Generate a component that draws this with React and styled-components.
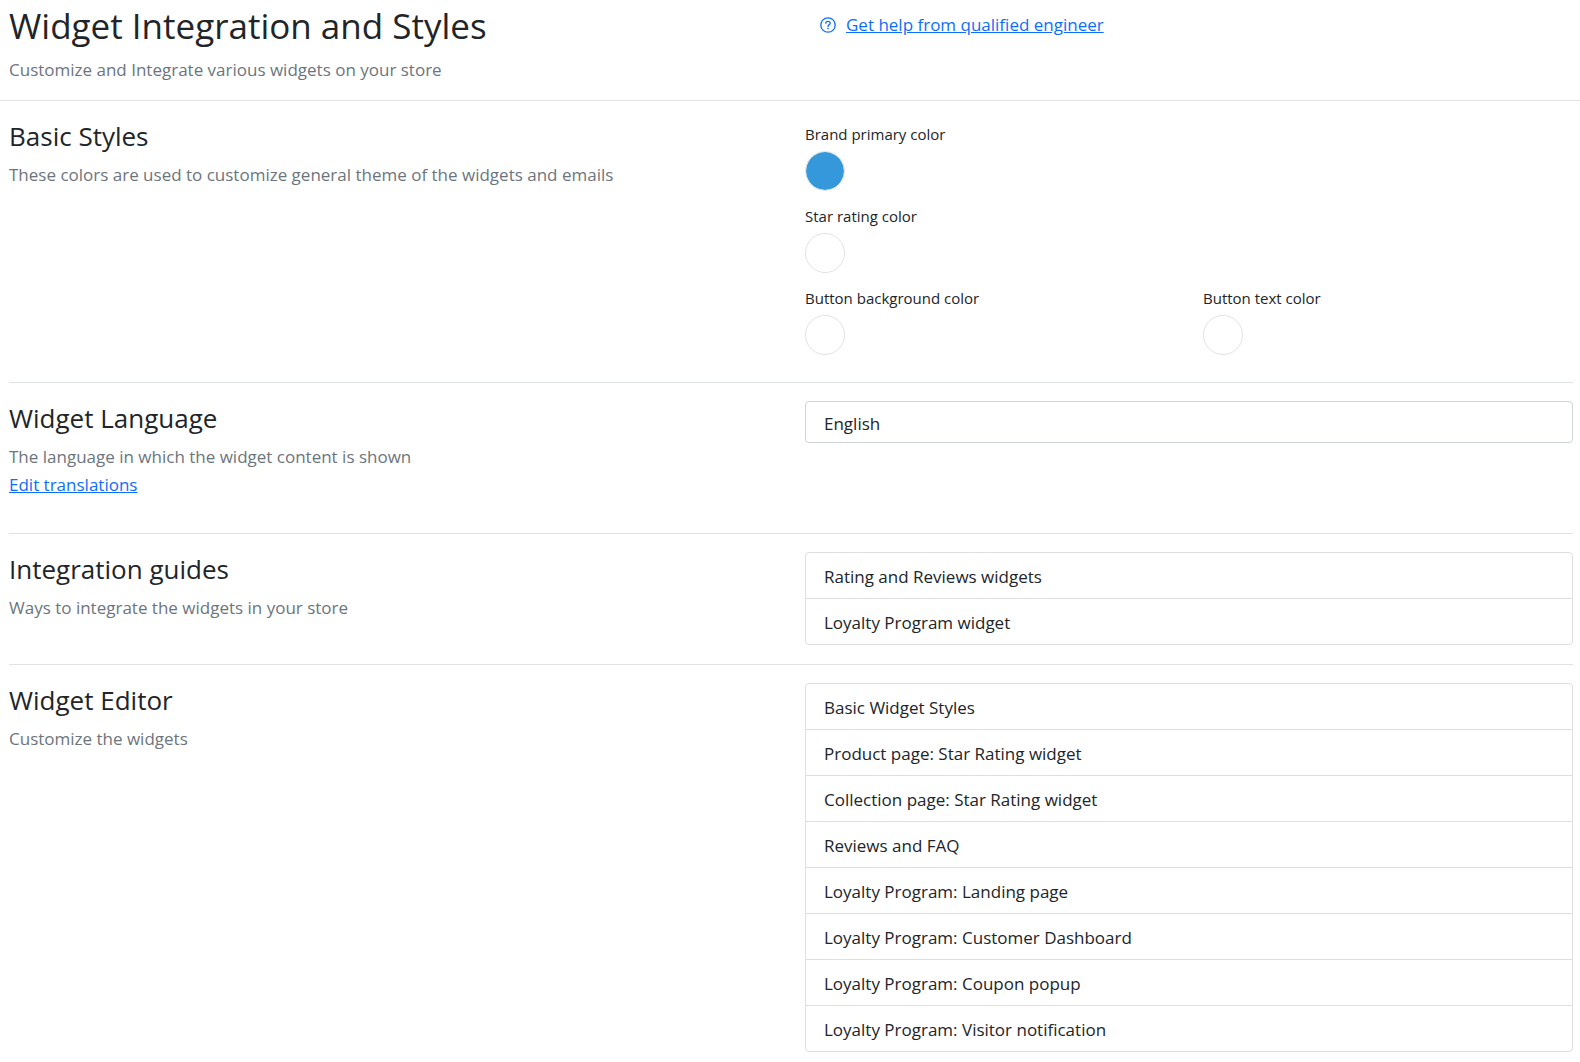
import React from "react";
import styled, { createGlobalStyle } from "styled-components";

const GlobalStyle = createGlobalStyle`
  *, *::before, *::after { box-sizing: border-box; }
  body {
    margin: 0;
    background: #fff;
    color: #212529;
    font-family: "Segoe UI", "Open Sans", "Noto Sans", sans-serif;
    font-size: 17px;
    line-height: 28px;
  }
`;

const Columns = styled.div`
  display: grid;
  grid-template-columns: minmax(0, 1fr) minmax(0, 1fr);
  column-gap: 28px;
`;

const Header = styled.header`
  padding: 4px 7px 16px 9px;
  border-bottom: 1px solid #dee2e6;
`;

const Main = styled.main`
  padding: 0 7px 8px 9px;
`;

const Section = styled.section`
  padding: 18px 0 ${(p) => p.$bottom || 19}px;
  & + & { border-top: 1px solid #dee2e6; }
`;

const PageTitle = styled.h1`
  margin: 0 0 8px;
  font-size: 35px;
  line-height: 44px;
  font-weight: 400;
`;

const SectionTitle = styled.h2`
  margin: 0 0 8px;
  font-size: 26px;
  line-height: 34px;
  font-weight: 400;
`;

const Muted = styled.p`
  margin: 0;
  color: #6c757d;
`;

const Link = styled.a`
  color: #0d6efd;
  text-decoration: underline;
`;

const Help = styled.div`
  display: flex;
  align-items: center;
  gap: 10px;
  height: 42px;
  padding-left: 15px;
  color: #0d6efd;
  svg { display: block; }
`;

const Swatches = styled.div`
  display: grid;
  grid-template-columns: minmax(0, 1fr) minmax(0, 1fr);
  column-gap: 28px;
  row-gap: 13px;
  padding-top: 3px;
`;

const Field = styled.div`
  display: flex;
  flex-direction: column;
  align-items: flex-start;
  gap: 5px;
  grid-column: ${(p) => (p.$wide ? "1 / -1" : "auto")};
`;

const FieldLabel = styled.label`
  font-size: 15px;
  line-height: 24px;
`;

const ColorInput = styled.input`
  appearance: none;
  width: 40px;
  height: 40px;
  padding: 0;
  border: 1px solid #dee2e6;
  border-radius: 50%;
  background: none;
  overflow: hidden;
  cursor: pointer;
  &::-webkit-color-swatch-wrapper { padding: 0; }
  &::-webkit-color-swatch { border: 0; border-radius: 50%; }
`;

const Select = styled.select`
  appearance: none;
  display: block;
  width: 100%;
  height: 42px;
  padding: 3px 18px 0;
  border: 1px solid #ced4da;
  border-radius: 4px;
  background: #fff;
  color: inherit;
  font: inherit;
`;

const List = styled.ul`
  margin: 0;
  padding: 0;
  list-style: none;
  border: 1px solid #dfdfdf;
  border-radius: 4px;
`;

const Item = styled.li`
  & + & { border-top: 1px solid #dfdfdf; }
`;

const ItemLink = styled.a`
  display: block;
  padding: 10px 18px 7px;
  color: inherit;
  text-decoration: none;
`;

const colors = [
  { id: "brand", label: "Brand primary color", value: "#3498db", wide: true },
  { id: "star", label: "Star rating color", value: "#ffffff", wide: true },
  { id: "button-bg", label: "Button background color", value: "#ffffff" },
  { id: "button-text", label: "Button text color", value: "#ffffff" },
];

const guides = ["Rating and Reviews widgets", "Loyalty Program widget"];

const editors = [
  "Basic Widget Styles",
  "Product page: Star Rating widget",
  "Collection page: Star Rating widget",
  "Reviews and FAQ",
  "Loyalty Program: Landing page",
  "Loyalty Program: Customer Dashboard",
  "Loyalty Program: Coupon popup",
  "Loyalty Program: Visitor notification",
];

function QuestionIcon() {
  return (
    <svg width="16" height="16" viewBox="0 0 16 16" fill="none" stroke="currentColor" strokeWidth="1.3" aria-hidden="true">
      <circle cx="8" cy="8" r="7.2" />
      <path d="M5.8 6.2C5.8 5 6.8 4.3 8 4.3s2.2.8 2.2 1.9C10.200 7.600 8 7.700 8 9.500" strokeLinecap="round" />
      <circle cx="8" cy="11.600" r="0.800" fill="currentColor" stroke="none" />
    </svg>
  );
}

function LinkList({ items }) {
  return (
    <List>
      {items.map((name) => (
        <Item key={name}>
          <ItemLink href="#">{name}</ItemLink>
        </Item>
      ))}
    </List>
  );
}

export default function App() {
  return (
    <>
      <GlobalStyle />
      <Header>
        <Columns>
          <div>
            <PageTitle>Widget Integration and Styles</PageTitle>
            <Muted>Customize and Integrate various widgets on your store</Muted>
          </div>
          <Help>
            <QuestionIcon />
            <Link href="#">Get help from qualified engineer</Link>
          </Help>
        </Columns>
      </Header>
      <Main>
        <Section $bottom={27}>
          <Columns>
            <div>
              <SectionTitle>Basic Styles</SectionTitle>
              <Muted>These colors are used to customize general theme of the widgets and emails</Muted>
            </div>
            <Swatches>
              {colors.map((c) => (
                <Field key={c.id} $wide={c.wide}>
                  <FieldLabel htmlFor={c.id}>{c.label}</FieldLabel>
                  <ColorInput id={c.id} type="color" defaultValue={c.value} />
                </Field>
              ))}
            </Swatches>
          </Columns>
        </Section>
        <Section $bottom={34}>
          <Columns>
            <div>
              <SectionTitle>
                <label htmlFor="language">Widget Language</label>
              </SectionTitle>
              <Muted>The language in which the widget content is shown</Muted>
              <Link href="#">Edit translations</Link>
            </div>
            <Select id="language" defaultValue="en">
              <option value="en">English</option>
            </Select>
          </Columns>
        </Section>
        <Section>
          <Columns>
            <div>
              <SectionTitle>Integration guides</SectionTitle>
              <Muted>Ways to integrate the widgets in your store</Muted>
            </div>
            <LinkList items={guides} />
          </Columns>
        </Section>
        <Section>
          <Columns>
            <div>
              <SectionTitle>Widget Editor</SectionTitle>
              <Muted>Customize the widgets</Muted>
            </div>
            <LinkList items={editors} />
          </Columns>
        </Section>
      </Main>
    </>
  );
}
